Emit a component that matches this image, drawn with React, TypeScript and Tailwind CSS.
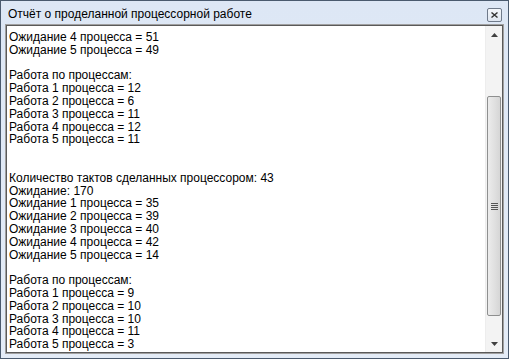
import React from 'react';

const lines = [
  'Ожидание 4 процесса = 51',
  'Ожидание 5 процесса = 49',
  '',
  'Работа по процессам:',
  'Работа 1 процесса = 12',
  'Работа 2 процесса = 6',
  'Работа 3 процесса = 11',
  'Работа 4 процесса = 12',
  'Работа 5 процесса = 11',
  '',
  '',
  'Количество тактов сделанных процессором: 43',
  'Ожидание: 170',
  'Ожидание 1 процесса = 35',
  'Ожидание 2 процесса = 39',
  'Ожидание 3 процесса = 40',
  'Ожидание 4 процесса = 42',
  'Ожидание 5 процесса = 14',
  '',
  'Работа по процессам:',
  'Работа 1 процесса = 9',
  'Работа 2 процесса = 10',
  'Работа 3 процесса = 10',
  'Работа 4 процесса = 11',
  'Работа 5 процесса = 3',
];

const App = () => {
  return (
    <div className="w-[509px] h-[359px] overflow-hidden bg-white">
      <div className="w-[509px] h-[359px] flex flex-col border border-[#4a5a6e] bg-gradient-to-b from-[#dde7f5] to-[#e4ecf7] font-['Liberation_Sans',sans-serif]">
        {/* Title bar */}
        <div className="h-[23px] flex items-start justify-between pl-[7px] pr-[6px] pt-[6px]">
          <span className="text-[12px] leading-[14px] text-black">Отчёт о проделанной процессорной работе</span>
          <button className="w-[15px] h-[14px] mt-[1px] border border-[#6f7a8a] rounded-[2px] bg-gradient-to-b from-[#f4f7fb] to-[#dfe6f0] flex items-center justify-center">
            <svg width="7" height="6" viewBox="0 0 7 6">
              <path d="M0.5 0.5 L6.5 5.5 M6.5 0.5 L0.5 5.5" stroke="#333" strokeWidth="1.4" />
            </svg>
          </button>
        </div>

        {/* Text area */}
        <div className="flex-1 mx-[4px] mb-[4px] border border-[#a0a0a0]">
          <div className="h-full flex border border-[#5a5a5a] bg-white">
            <div className="flex-1 pl-[2px] pt-[5px] text-[12px] leading-[12.8px] text-black">
              {lines.map((line, i) => (
                <div key={i} className="h-[12.8px] whitespace-pre">
                  {line}
                </div>
              ))}
            </div>

            {/* Scrollbar */}
            <div className="w-[17px] flex flex-col bg-[#f3f3f3] border-l border-[#ededed]">
              <div className="h-[17px] flex items-center justify-center">
                <svg width="7" height="4" viewBox="0 0 7 4">
                  <path d="M3.5 0 L7 4 L0 4 Z" fill="#404040" />
                </svg>
              </div>
              <div className="h-[53px]" />
              <div className="h-[220px] mx-[1px] rounded-[2px] border border-[#8e8f8f] bg-gradient-to-r from-[#ececec] to-[#d6d6d6] flex items-center justify-center">
                <div className="flex flex-col gap-[1px]">
                  <div className="w-[7px] h-[1px] bg-[#555]" />
                  <div className="w-[7px] h-[1px] bg-[#555]" />
                  <div className="w-[7px] h-[1px] bg-[#555]" />
                  <div className="w-[7px] h-[1px] bg-[#555]" />
                </div>
              </div>
              <div className="flex-1" />
              <div className="h-[17px] flex items-center justify-center">
                <svg width="7" height="4" viewBox="0 0 7 4">
                  <path d="M0 0 L7 0 L3.5 4 Z" fill="#404040" />
                </svg>
              </div>
            </div>
          </div>
        </div>
      </div>
    </div>
  );
};

export default App;
